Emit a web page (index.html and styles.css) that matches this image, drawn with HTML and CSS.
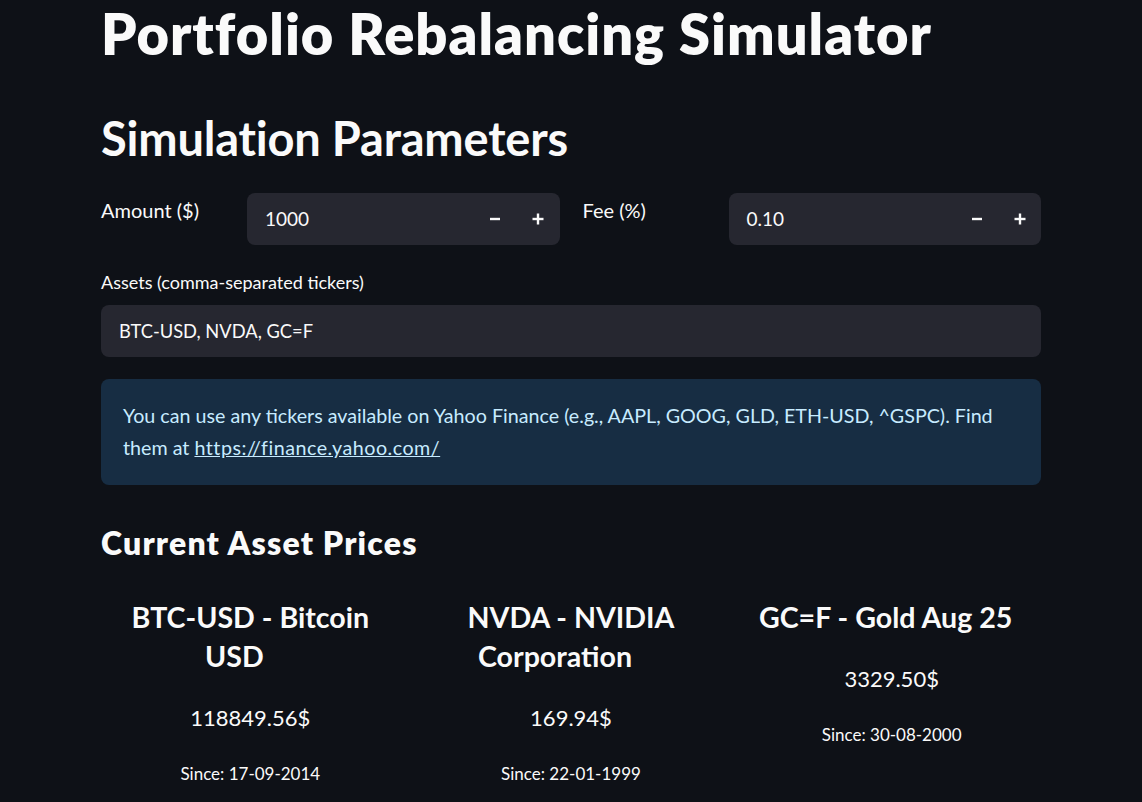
FILE: index.html
```html
<!DOCTYPE html>
<html lang="en">
<head>
<meta charset="utf-8">
<title>Portfolio Rebalancing Simulator</title>
<link rel="stylesheet" href="styles.css">
</head>
<body>
<main class="container">
  <h1 class="title">Portfolio Rebalancing Simulator</h1>
  <h2 class="section-title">Simulation Parameters</h2>

  <div class="param-row">
    <div class="param">
      <p class="param-label">Amount ($)</p>
      <div class="number-input">
        <span class="number-value">1000</span>
        <button class="step-btn" type="button" aria-label="Decrease">
          <svg width="12" height="12" viewBox="0 0 12 12"><line x1="1" y1="6" x2="11" y2="6"/></svg>
        </button>
        <button class="step-btn" type="button" aria-label="Increase">
          <svg width="12" height="12" viewBox="0 0 12 12"><line x1="0.5" y1="6" x2="11.5" y2="6"/><line x1="6" y1="0.5" x2="6" y2="11.5"/></svg>
        </button>
      </div>
    </div>
    <div class="param">
      <p class="param-label">Fee (%)</p>
      <div class="number-input">
        <span class="number-value">0.10</span>
        <button class="step-btn" type="button" aria-label="Decrease">
          <svg width="12" height="12" viewBox="0 0 12 12"><line x1="1" y1="6" x2="11" y2="6"/></svg>
        </button>
        <button class="step-btn" type="button" aria-label="Increase">
          <svg width="12" height="12" viewBox="0 0 12 12"><line x1="0.5" y1="6" x2="11.5" y2="6"/><line x1="6" y1="0.5" x2="6" y2="11.5"/></svg>
        </button>
      </div>
    </div>
  </div>

  <p class="field-label">Assets (comma-separated tickers)</p>
  <div class="text-input">BTC-USD, NVDA, GC=F</div>

  <div class="info-box">
    <p>You can use any tickers available on Yahoo Finance (e.g., AAPL, GOOG, GLD, ETH-USD, ^GSPC). Find<br>them at <a href="#">https://finance.yahoo.com/</a></p>
  </div>

  <h3 class="subsection-title">Current Asset Prices</h3>

  <div class="prices">
    <div class="asset">
      <h4 class="asset-name">BTC-USD - Bitcoin USD<span class="anchor-space"></span></h4>
      <p class="asset-price">118849.56$</p>
      <p class="asset-since">Since: 17-09-2014</p>
    </div>
    <div class="asset">
      <h4 class="asset-name">NVDA - NVIDIA Corporation<span class="anchor-space"></span></h4>
      <p class="asset-price">169.94$</p>
      <p class="asset-since">Since: 22-01-1999</p>
    </div>
    <div class="asset">
      <h4 class="asset-name">GC=F - Gold Aug 25<span class="anchor-space anchor-space--short"></span></h4>
      <p class="asset-price">3329.50$</p>
      <p class="asset-since">Since: 30-08-2000</p>
    </div>
  </div>
</main>
</body>
</html>
```

FILE: styles.css
```css
* { box-sizing: border-box; }

html, body {
  margin: 0;
  padding: 0;
  background: #0e1117;
}

body {
  color: #fafafa;
  font-family: "Lato", "Source Sans Pro", "Liberation Sans", sans-serif;
  overflow: hidden;
}

.container {
  max-width: 940px;
  margin: 0 auto;
}

.title {
  margin: 0;
  font-size: 56px;
  font-weight: 800;
  line-height: 1.2;
  letter-spacing: 1px;
}

.section-title {
  margin: 43px 0 0;
  font-size: 47px;
  font-weight: 700;
  line-height: 1.2;
  letter-spacing: -0.2px;
}

.param-row {
  margin-top: 26px;
  display: grid;
  grid-template-columns: 1fr 1fr;
  gap: 23px;
}

.param {
  display: grid;
  grid-template-columns: 146px 1fr;
  align-items: start;
}

.param-label {
  margin: 4px 0 0;
  font-size: 20px;
  line-height: 26px;
}

.number-input {
  height: 52px;
  background: #262730;
  border-radius: 8px;
  display: flex;
  align-items: center;
  padding-left: 18px;
}

.number-value {
  flex: 1;
  font-size: 19px;
}

.step-btn {
  width: 43px;
  height: 52px;
  border: 0;
  padding: 0;
  background: transparent;
  display: flex;
  align-items: center;
  justify-content: center;
  cursor: pointer;
}

.step-btn svg line {
  stroke: #fafafa;
  stroke-width: 2.4;
}

.field-label {
  margin: 25px 0 0;
  font-size: 18px;
  line-height: 24px;
}

.text-input {
  margin-top: 11px;
  height: 52px;
  background: #262730;
  border-radius: 8px;
  padding: 0 18px;
  display: flex;
  align-items: center;
  font-size: 18.3px;
}

.info-box {
  margin-top: 22px;
  background: #172d43;
  border-radius: 8px;
  padding: 21px 22px;
  color: #c7ebff;
}

.info-box p {
  margin: 0;
  font-size: 19.7px;
  line-height: 32px;
}

.info-box a {
  color: #c7ebff;
  text-decoration: underline;
  letter-spacing: 0.5px;
}

.subsection-title {
  margin: 39px 0 0;
  font-size: 32px;
  font-weight: 800;
  line-height: 1.2;
  letter-spacing: 1.2px;
}

.prices {
  margin-top: 36px;
  display: grid;
  grid-template-columns: repeat(3, 1fr);
  gap: 22px;
  text-align: center;
}

.asset-name {
  margin: 0;
  font-size: 28.6px;
  font-weight: 700;
  line-height: 39px;
  padding: 0 14px;
}

.anchor-space {
  display: inline-block;
  width: 32px;
}

.anchor-space--short {
  width: 12px;
}

.asset-price {
  margin: 26px 0 0;
  font-size: 22px;
  line-height: 32px;
}

.asset-since {
  margin: 27px 0 0;
  font-size: 17px;
  line-height: 26px;
}
```
